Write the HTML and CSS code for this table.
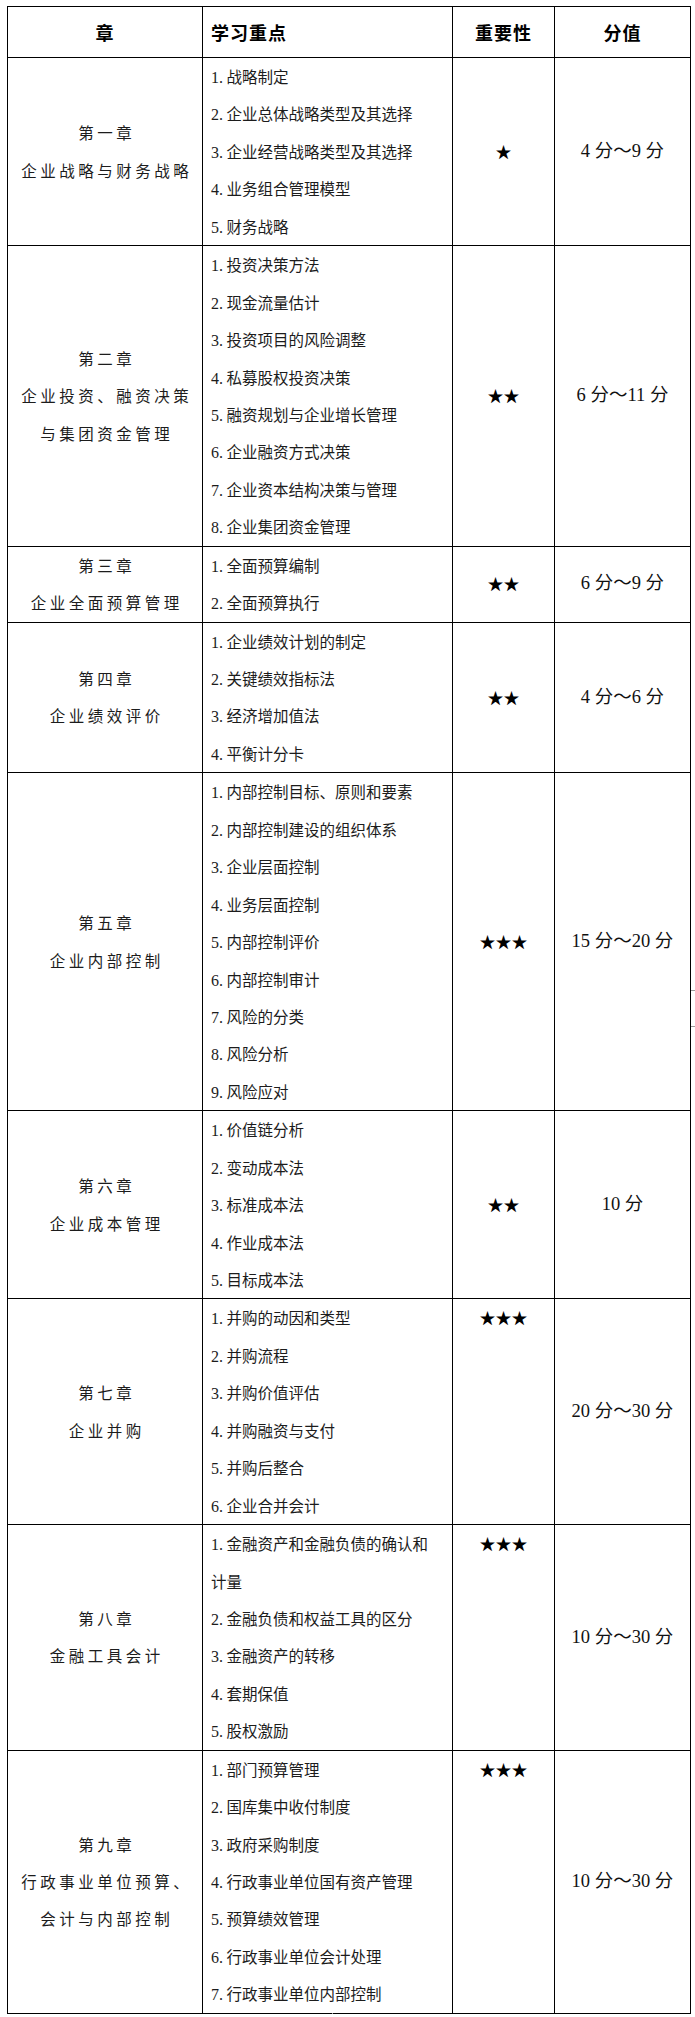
FILE: index.html
```html
<!DOCTYPE html>
<html lang="zh-CN">
<head>
<meta charset="utf-8">
<title>学习重点</title>
<link rel="stylesheet" href="styles.css">
</head>
<body>
<div class="page">
<table class="syl">
  <colgroup>
    <col class="c1"><col class="c2"><col class="c3"><col class="c4">
  </colgroup>
  <thead>
    <tr>
      <th>章</th>
      <th class="th-left">学习重点</th>
      <th>重要性</th>
      <th>分值</th>
    </tr>
  </thead>
  <tbody>
    <tr>
      <td class="ch">第一章<br>企业战略与财务战略</td>
      <td class="pts">
        <p><span class="n">1.</span>战略制定</p>
        <p><span class="n">2.</span>企业总体战略类型及其选择</p>
        <p><span class="n">3.</span>企业经营战略类型及其选择</p>
        <p><span class="n">4.</span>业务组合管理模型</p>
        <p><span class="n">5.</span>财务战略</p>
      </td>
      <td class="imp">★</td>
      <td class="score">4 分～9 分</td>
    </tr>
    <tr>
      <td class="ch">第二章<br>企业投资、融资决策<br>与集团资金管理</td>
      <td class="pts">
        <p><span class="n">1.</span>投资决策方法</p>
        <p><span class="n">2.</span>现金流量估计</p>
        <p><span class="n">3.</span>投资项目的风险调整</p>
        <p><span class="n">4.</span>私募股权投资决策</p>
        <p><span class="n">5.</span>融资规划与企业增长管理</p>
        <p><span class="n">6.</span>企业融资方式决策</p>
        <p><span class="n">7.</span>企业资本结构决策与管理</p>
        <p><span class="n">8.</span>企业集团资金管理</p>
      </td>
      <td class="imp">★★</td>
      <td class="score">6 分～11 分</td>
    </tr>
    <tr>
      <td class="ch">第三章<br>企业全面预算管理</td>
      <td class="pts">
        <p><span class="n">1.</span>全面预算编制</p>
        <p><span class="n">2.</span>全面预算执行</p>
      </td>
      <td class="imp">★★</td>
      <td class="score">6 分～9 分</td>
    </tr>
    <tr>
      <td class="ch">第四章<br>企业绩效评价</td>
      <td class="pts">
        <p><span class="n">1.</span>企业绩效计划的制定</p>
        <p><span class="n">2.</span>关键绩效指标法</p>
        <p><span class="n">3.</span>经济增加值法</p>
        <p><span class="n">4.</span>平衡计分卡</p>
      </td>
      <td class="imp">★★</td>
      <td class="score">4 分～6 分</td>
    </tr>
    <tr>
      <td class="ch">第五章<br>企业内部控制</td>
      <td class="pts">
        <p><span class="n">1.</span>内部控制目标、原则和要素</p>
        <p><span class="n">2.</span>内部控制建设的组织体系</p>
        <p><span class="n">3.</span>企业层面控制</p>
        <p><span class="n">4.</span>业务层面控制</p>
        <p><span class="n">5.</span>内部控制评价</p>
        <p><span class="n">6.</span>内部控制审计</p>
        <p><span class="n">7.</span>风险的分类</p>
        <p><span class="n">8.</span>风险分析</p>
        <p><span class="n">9.</span>风险应对</p>
      </td>
      <td class="imp">★★★</td>
      <td class="score">15 分～20 分</td>
    </tr>
    <tr>
      <td class="ch">第六章<br>企业成本管理</td>
      <td class="pts">
        <p><span class="n">1.</span>价值链分析</p>
        <p><span class="n">2.</span>变动成本法</p>
        <p><span class="n">3.</span>标准成本法</p>
        <p><span class="n">4.</span>作业成本法</p>
        <p><span class="n">5.</span>目标成本法</p>
      </td>
      <td class="imp">★★</td>
      <td class="score">10 分</td>
    </tr>
    <tr>
      <td class="ch">第七章<br>企业并购</td>
      <td class="pts">
        <p><span class="n">1.</span>并购的动因和类型</p>
        <p><span class="n">2.</span>并购流程</p>
        <p><span class="n">3.</span>并购价值评估</p>
        <p><span class="n">4.</span>并购融资与支付</p>
        <p><span class="n">5.</span>并购后整合</p>
        <p><span class="n">6.</span>企业合并会计</p>
      </td>
      <td class="imp top">★★★</td>
      <td class="score">20 分～30 分</td>
    </tr>
    <tr>
      <td class="ch">第八章<br>金融工具会计</td>
      <td class="pts">
        <p><span class="n">1.</span>金融资产和金融负债的确认和<br>计量</p>
        <p><span class="n">2.</span>金融负债和权益工具的区分</p>
        <p><span class="n">3.</span>金融资产的转移</p>
        <p><span class="n">4.</span>套期保值</p>
        <p><span class="n">5.</span>股权激励</p>
      </td>
      <td class="imp top">★★★</td>
      <td class="score">10 分～30 分</td>
    </tr>
    <tr>
      <td class="ch">第九章<br>行政事业单位预算、<br>会计与内部控制</td>
      <td class="pts">
        <p><span class="n">1.</span>部门预算管理</p>
        <p><span class="n">2.</span>国库集中收付制度</p>
        <p><span class="n">3.</span>政府采购制度</p>
        <p><span class="n">4.</span>行政事业单位国有资产管理</p>
        <p><span class="n">5.</span>预算绩效管理</p>
        <p><span class="n">6.</span>行政事业单位会计处理</p>
        <p><span class="n">7.</span>行政事业单位内部控制</p>
      </td>
      <td class="imp top">★★★</td>
      <td class="score">10 分～30 分</td>
    </tr>
  </tbody>
</table>
<span class="handle h-r1"></span>
<span class="handle h-r2"></span>
<span class="handle h-b"></span>
</div>
</body>
</html>
```

FILE: styles.css
```css
html, body {
  margin: 0;
  padding: 0;
  background: #fff;
}

.page {
  position: relative;
  padding: 6px 0 0 7px;
}

.syl {
  border-collapse: collapse;
  table-layout: fixed;
  width: 683px;
  font-family: "Noto Sans CJK SC", sans-serif;
  font-size: 15.5px;
  color: #1c1c1c;
}

.c1 { width: 195px; }
.c2 { width: 250px; }
.c3 { width: 102px; }
.c4 { width: 136px; }

.syl th,
.syl td {
  border: 1px solid #000;
  padding: 0;
  line-height: 37.44px;
  vertical-align: middle;
  text-align: center;
}

.syl th {
  height: 50px;
  line-height: 50px;
  font-size: 18px;
  font-weight: 700;
  letter-spacing: 1px;
  color: #000;
}

.syl th.th-left {
  text-align: left;
  padding-left: 8px;
}

.syl td.ch {
  letter-spacing: 3.5px;
  padding-left: 3.5px;
}

.syl td.pts {
  text-align: left;
  padding: 0 6px 0 8px;
}

.pts p {
  margin: 0;
}

.n {
  display: inline-block;
  width: 15.5px;
  line-height: 1;
  font-family: "Liberation Serif", serif;
  font-size: 16px;
}

.syl td.imp {
  font-size: 16px;
  color: #000;
}

.syl td.imp.top {
  vertical-align: top;
}

.syl td.score {
  font-family: "Liberation Serif", "Noto Sans CJK SC", serif;
  font-size: 18.5px;
  color: #111;
}

.handle {
  position: absolute;
  background: #9a9a9a;
}

.h-r1 { left: 691px; top: 990px; width: 4px; height: 1px; }
.h-r2 { left: 691px; top: 1026px; width: 4px; height: 1px; }
.h-b { left: 332px; top: 2013px; width: 1px; height: 4px; }
```
